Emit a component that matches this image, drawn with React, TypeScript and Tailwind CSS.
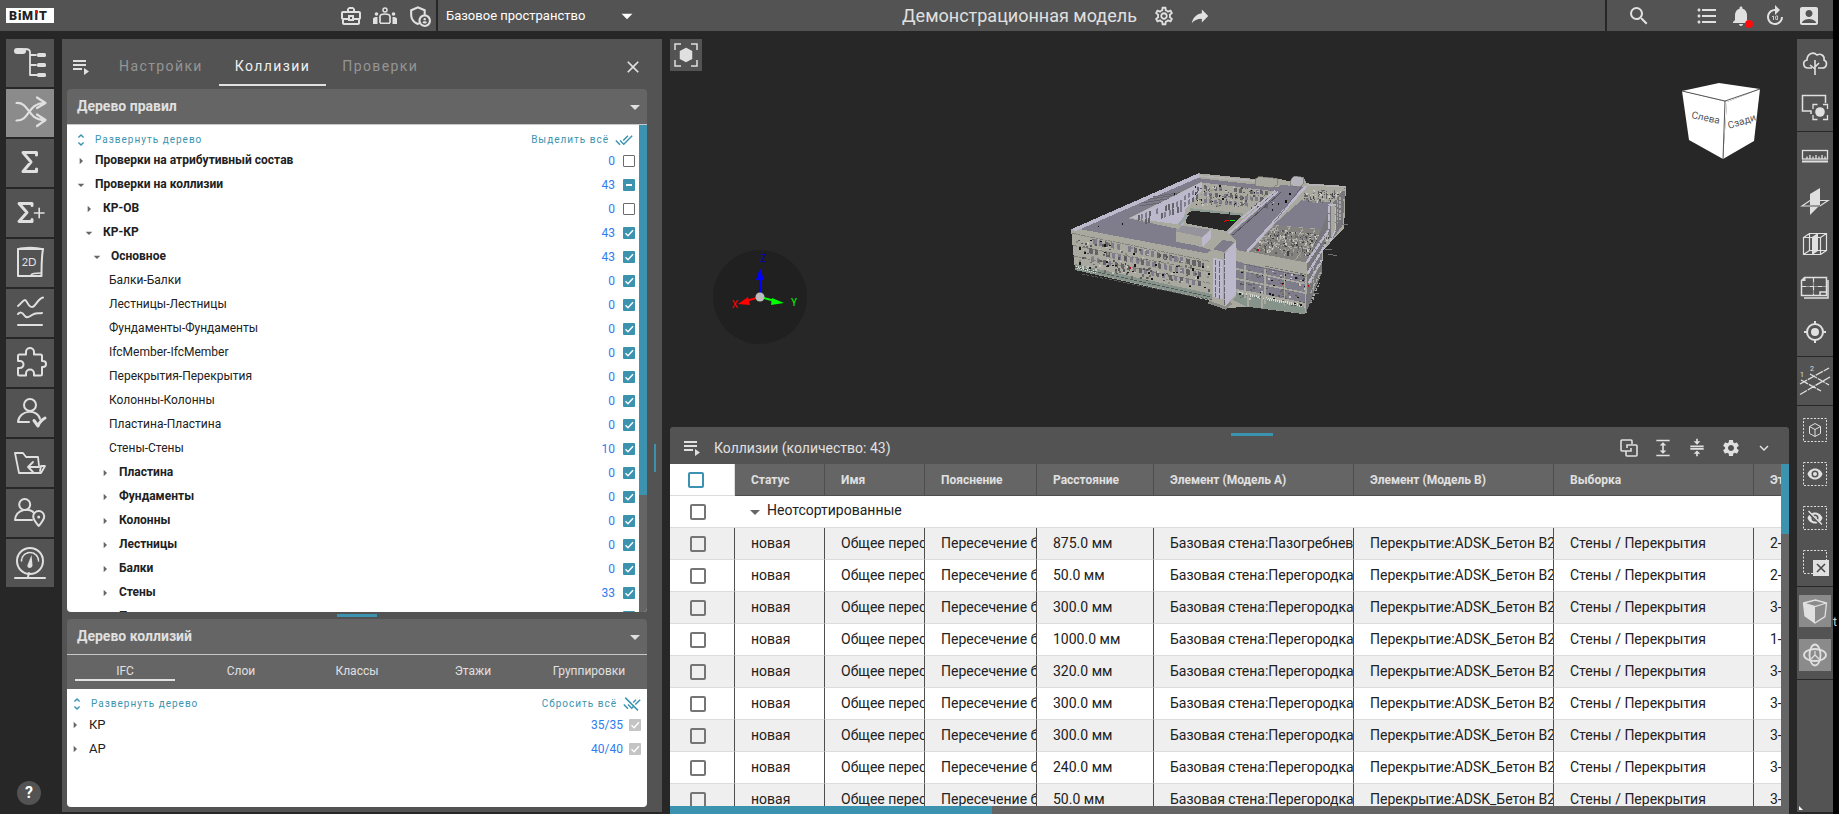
import { useState } from 'react';
import type { ReactNode } from 'react';
import clsx from 'clsx';
import {
  MdAccountBox,
  MdArrowDropDown,
  MdArrowRight,
  MdClose,
  MdCompress,
  MdDoneAll,
  MdExpand,
  MdExpandMore,
  MdFormatListBulleted,
  MdForward10,
  MdNotifications,
  MdOutlineAdminPanelSettings,
  MdOutlineBusinessCenter,
  MdOutlineSettings,
  MdRemoveDone,
  MdSearch,
  MdSettings,
  MdUnfoldMore,
} from 'react-icons/md';

type CheckState = 'on' | 'off' | 'mixed';

interface TreeNode {
  name: string;
  level: number;
  kind: 'open' | 'closed' | 'leaf';
  count: number;
  state: CheckState;
}

const RULES: TreeNode[] = [
  { name: 'Проверки на атрибутивный состав', level: 0, kind: 'closed', count: 0, state: 'off' },
  { name: 'Проверки на коллизии', level: 0, kind: 'open', count: 43, state: 'mixed' },
  { name: 'КР-ОВ', level: 1, kind: 'closed', count: 0, state: 'off' },
  { name: 'КР-КР', level: 1, kind: 'open', count: 43, state: 'on' },
  { name: 'Основное', level: 2, kind: 'open', count: 43, state: 'on' },
  { name: 'Балки-Балки', level: 3, kind: 'leaf', count: 0, state: 'on' },
  { name: 'Лестницы-Лестницы', level: 3, kind: 'leaf', count: 0, state: 'on' },
  { name: 'Фундаменты-Фундаменты', level: 3, kind: 'leaf', count: 0, state: 'on' },
  { name: 'IfcMember-IfcMember', level: 3, kind: 'leaf', count: 0, state: 'on' },
  { name: 'Перекрытия-Перекрытия', level: 3, kind: 'leaf', count: 0, state: 'on' },
  { name: 'Колонны-Колонны', level: 3, kind: 'leaf', count: 0, state: 'on' },
  { name: 'Пластина-Пластина', level: 3, kind: 'leaf', count: 0, state: 'on' },
  { name: 'Стены-Стены', level: 3, kind: 'leaf', count: 10, state: 'on' },
  { name: 'Пластина', level: 3, kind: 'closed', count: 0, state: 'on' },
  { name: 'Фундаменты', level: 3, kind: 'closed', count: 0, state: 'on' },
  { name: 'Колонны', level: 3, kind: 'closed', count: 0, state: 'on' },
  { name: 'Лестницы', level: 3, kind: 'closed', count: 0, state: 'on' },
  { name: 'Балки', level: 3, kind: 'closed', count: 0, state: 'on' },
  { name: 'Стены', level: 3, kind: 'closed', count: 33, state: 'on' },
  { name: 'Перекрытия', level: 3, kind: 'closed', count: 0, state: 'on' },
];

const LEVEL_PADDING = ['pl-2', 'pl-4', 'pl-6', 'pl-8'];

const ROWS = [
  { distance: '875.0 мм', a: 'Базовая стена:Пазогребневая', floor: '2-й этаж' },
  { distance: '50.0 мм', a: 'Базовая стена:Перегородка', floor: '2-й этаж' },
  { distance: '300.0 мм', a: 'Базовая стена:Перегородка', floor: '3-й этаж' },
  { distance: '1000.0 мм', a: 'Базовая стена:Перегородка', floor: '1-й этаж' },
  { distance: '320.0 мм', a: 'Базовая стена:Перегородка', floor: '3-й этаж' },
  { distance: '300.0 мм', a: 'Базовая стена:Перегородка', floor: '3-й этаж' },
  { distance: '300.0 мм', a: 'Базовая стена:Перегородка', floor: '3-й этаж' },
  { distance: '240.0 мм', a: 'Базовая стена:Перегородка', floor: '3-й этаж' },
  { distance: '50.0 мм', a: 'Базовая стена:Перегородка', floor: '3-й этаж' },
];

const COLUMNS = ['Статус', 'Имя', 'Пояснение', 'Расстояние', 'Элемент (Модель A)', 'Элемент (Модель B)', 'Выборка', 'Этаж'];

function Checkbox({ label, state = 'off', muted = false }: { label: string; state?: CheckState; muted?: boolean }) {
  const [value, setValue] = useState<CheckState>(state);
  return (
    <span className="relative flex size-3 shrink-0">
      <input
        type="checkbox"
        aria-label={label}
        checked={value === 'on'}
        onChange={(e) => setValue(e.target.checked ? 'on' : 'off')}
        className={clsx(
          'size-3 appearance-none rounded-[1px]',
          value === 'off' && 'border border-[#6b6b6b] bg-white',
          value !== 'off' && (muted ? 'bg-[#c4c4c4]' : 'bg-[#3c93b0]'),
        )}
      />
      {value !== 'off' && (
        <svg viewBox="0 0 12 12" className="pointer-events-none absolute inset-0 size-3" fill="none" stroke="#fff" strokeWidth="1.4">
          {value === 'on' ? <path d="M2.5 6.2 5 8.7 10 3.3" /> : <path d="M3 6h6" strokeWidth="1.8" />}
        </svg>
      )}
    </span>
  );
}

function RowCheckbox({ label, accent = false }: { label: string; accent?: boolean }) {
  return (
    <input
      type="checkbox"
      aria-label={label}
      className={clsx(
        'block size-4 appearance-none rounded-xs border-2 bg-transparent checked:bg-[#3c93b0]',
        accent ? 'border-[#3c93b0]' : 'border-[#757575]',
      )}
    />
  );
}

function MenuIcon() {
  return (
    <svg viewBox="0 0 16 16" className="size-4" fill="currentColor">
      <path d="M0 1h13v2H0zM0 5h13v2H0zM0 9h9v2H0zM11 9l5 3.500-5 3.500z" />
    </svg>
  );
}

/* ---------- left rail icons ---------- */

const railIcons: { label: string; icon: ReactNode }[] = [
  {
    label: 'Дерево модели',
    icon: (
      <>
        <rect x="8" y="9" width="12" height="6" rx="3" fill="currentColor" stroke="none" />
        <path d="M19 10c4 0 5 1 5 3v23h7M24 16h6M24 26h6" strokeWidth="1.8" />
        <rect x="31" y="14" width="9" height="4" rx="1.5" fill="currentColor" stroke="none" />
        <rect x="31" y="24" width="9" height="4" rx="1.5" fill="currentColor" stroke="none" />
        <rect x="31" y="34" width="9" height="4" rx="1.5" fill="currentColor" stroke="none" />
      </>
    ),
  },
  {
    label: 'Коллизии',
    icon: <path d="M10.500 14C24 13 21 31.500 39 31M10.500 31.500C24 32 21 14 39 14M31 8.500l8.500 5.500-8.500 5M31 25.500l8.500 5.500-8.500 6" strokeWidth="2.2" />,
  },
  { label: 'Сумма', icon: <path d="M30.500 16v-2.500H17L25 23 17 32.500h13.500V30" strokeWidth="3" /> },
  {
    label: 'Добавить сумму',
    icon: (
      <>
        <path d="M26 16.500V14.500H13L21 23.500 13 32.500H26V30.500" strokeWidth="3" />
        <path d="M28.500 24h9.500M33.200 19.300v9.500" strokeWidth="1.6" />
      </>
    ),
  },
  {
    label: '2D',
    icon: (
      <>
        <path d="M12 10h25c-1.500 8-1.500 18-1.500 27H12z" strokeWidth="2" />
        <path d="M12 10c6-2 18-2 25 0M25 36c1-2 5-2 10-2" strokeWidth="1.5" />
        <text x="23" y="27" textAnchor="middle" fontSize="11" fill="currentColor" stroke="none" fontFamily="Lato, sans-serif">2D</text>
      </>
    ),
  },
  { label: 'Графики', icon: <path d="M12 17c4-3 5-6 7-6s3 7 7 7 5-8 11-9.500M12 25c2-2 4-2 6 1s4 3 8 0 6-1 10-2M12 36h24" strokeWidth="2" /> },
  {
    label: 'Плагины',
    icon: <path d="M12 17a1.500 1.500 0 0 1 1.500-1.500H20v-2.500a4 4 0 0 1 8 0v2.500h6.500A1.500 1.500 0 0 1 36 17v5h1a3 3 0 0 1 0 6h-1v7a1.500 1.500 0 0 1-1.500 1.500H28v-2a4 4 0 0 0-8 0v2h-6.500A1.500 1.500 0 0 1 12 35v-6h2a3.500 3.500 0 0 0 0-7h-2z" strokeWidth="2" />,
  },
  {
    label: 'Проверка',
    icon: (
      <>
        <circle cx="24" cy="16" r="6" strokeWidth="2" />
        <path d="M23 33H12c1-13 20-13 22-3" strokeWidth="2" />
        <path d="M28 31.500l4 5.500c1.500-4 3.500-6 7-8" strokeWidth="3" />
      </>
    ),
  },
  {
    label: 'Файлы',
    icon: <path d="M9 14h8l3 4h12l1 9M9 14l4 20h22l4-7h-4l-1 5M33 28H22M27 23l-5 5 5 5" strokeWidth="1.8" />,
  },
  {
    label: 'Пользователи на карте',
    icon: (
      <>
        <circle cx="18.700" cy="15.500" r="5.500" strokeWidth="2" />
        <path d="M26 31H9c1-12 16-12 19-7" strokeWidth="2" />
        <path d="M32.700 37c-4-5-5.500-6.500-5.500-9.500a5.500 5.500 0 0 1 11 0c0 3-1.500 4.500-5.500 9.500z" strokeWidth="2" />
        <circle cx="32.700" cy="28" r="1.500" fill="currentColor" stroke="none" />
      </>
    ),
  },
  {
    label: 'Показатели',
    icon: (
      <>
        <circle cx="24" cy="22" r="13" strokeWidth="2" />
        <path d="M9 39h30M22 38l1-4" strokeWidth="2" />
        <path d="M15.500 22a8.500 8.500 0 0 1 17 0" strokeWidth="1.600" strokeDasharray="2 1.300" />
        <path d="M25.500 16l1 10c0 4-6 4-5 0z" fill="currentColor" stroke="none" />
      </>
    ),
  },
];

/* ---------- right toolbar icons ---------- */

const dashedBox = <rect x="4.500" y="4.500" width="23" height="23" strokeDasharray="2 1.500" />;
const eye = (
  <path
    d="M16 10.500c-3.600 0-6.300 2.300-7.500 5.500 1.200 3.200 3.900 5.500 7.500 5.500s6.300-2.300 7.500-5.500c-1.200-3.200-3.900-5.500-7.500-5.500zm0 9a3.500 3.500 0 1 1 0-7 3.500 3.500 0 0 1 0 7zm0-1.500a2 2 0 1 0 0-4 2 2 0 0 0 0 4z"
    fill="currentColor"
    stroke="none"
  />
);

interface Tool {
  label: string;
  active?: boolean;
  icon: ReactNode;
}

const toolGroups: Tool[][] = [
  [
    {
      label: 'Природа',
      icon: <path d="M13 21H9c-5 0-6-7-1-8 0-6 6-9 10-5 4-2 8 1 7 5 4 2 3 8-2 8h-4M16 28V13M16 20l4-4M16 22l-5-4" strokeWidth="1.600" />,
    },
    {
      label: 'Область',
      icon: (
        <>
          <path d="M12 23v-3H3.500V4.500h23V12" strokeWidth="1.500" />
          <path d="M14 18v-4.500h4.500M24 13.500h4.500V18M28.500 24v4.500H24M18.500 28.500H14V24" strokeWidth="1.300" />
          <circle cx="21" cy="21" r="4.800" fill="currentColor" stroke="none" />
        </>
      ),
    },
  ],
  [
    {
      label: 'Линейка',
      icon: (
        <>
          <rect x="3.500" y="10.500" width="25" height="8.500" strokeWidth="1.300" />
          <path d="M8 19v-2.500M11 19v-4M14 19v-2.500M17 19v-4M20 19v-2.500M23 19v-4M26 19v-2.500" strokeWidth="1.300" />
          <path d="M3 21.500h26" strokeWidth="2" />
        </>
      ),
    },
    {
      label: 'Плоскость сечения',
      icon: (
        <>
          <path d="M3 22l8-5.500h18L21 22z" strokeWidth="1.200" />
          <path d="M11 10l10-6v17l-10 10z" fill="currentColor" stroke="none" />
          <path d="M11 22h10" stroke="#535353" />
        </>
      ),
    },
    {
      label: 'Сечение кубом',
      icon: (
        <>
          <path d="M4.500 9.500h17v17h-17zM10.500 5.500h17v17h-17zM4.500 9.500l6-4M21.500 9.500l6-4M4.500 26.500l6-4M21.500 26.500l6-4" strokeWidth="1.200" />
          <path d="M13 9l6-4v18l-6 4z" fill="currentColor" stroke="none" />
        </>
      ),
    },
    {
      label: 'План',
      icon: (
        <>
          <path d="M5.500 5.500h22v18h-25v-15z" strokeWidth="1.500" />
          <path d="M14.500 5.500v18M2.500 14.500h25" strokeWidth="1.200" strokeDasharray="5 1 1 1" />
          <path d="M29 8v18H5M21 23v-3h6" strokeWidth="1.500" />
          <path d="M2.500 9l4-4v4z" fill="currentColor" stroke="none" />
        </>
      ),
    },
    {
      label: 'Центрировать',
      icon: (
        <>
          <circle cx="16" cy="16" r="8" strokeWidth="2" />
          <circle cx="16" cy="16" r="4" fill="currentColor" stroke="none" />
          <path d="M16 5v3M16 24v3M5 16h3M24 16h3" strokeWidth="2" />
        </>
      ),
    },
  ],
  [
    {
      label: 'Оси',
      icon: (
        <>
          <path d="M1 29.500L31 12M1 19l29-16M2 15l20 11M11 9l19 11" strokeWidth="1.300" strokeDasharray="8 1" />
          <text x="1" y="12" fontSize="7" fill="currentColor" stroke="none" fontFamily="Roboto, sans-serif">1</text>
          <text x="11" y="6" fontSize="7" fill="currentColor" stroke="none" fontFamily="Roboto, sans-serif">2</text>
        </>
      ),
    },
  ],
  [
    {
      label: 'Выделенное',
      icon: (
        <>
          {dashedBox}
          <path d="M16 9.500l5.500 3v7l-5.500 3-5.500-3v-7zM10.500 12.500l5.500 3 5.500-3M16 15.500v7" />
        </>
      ),
    },
    { label: 'Показать', icon: <>{dashedBox}{eye}</> },
    {
      label: 'Скрыть',
      icon: (
        <>
          {dashedBox}
          {eye}
          <path d="M8.500 9.500l14 13.500" stroke="#535353" strokeWidth="2.500" />
          <path d="M9.500 9l13.500 13.500" strokeWidth="1.500" />
        </>
      ),
    },
    {
      label: 'Сбросить выделение',
      icon: (
        <>
          {dashedBox}
          <path d="M14 14h16v16H14z" fill="currentColor" stroke="none" />
          <path d="M18 18l8 8M26 18l-8 8" stroke="#444" strokeWidth="1.500" />
        </>
      ),
    },
  ],
  [
    {
      label: 'Куб навигации',
      active: true,
      icon: (
        <>
          <path d="M4.500 8l12-3 11 3-1.500 13.500L16 28 6 21zM4.500 8L16 11.500 27.500 8" strokeWidth="1.300" />
          <path d="M4.500 8L16 11.500V28L6 21z" fill="currentColor" stroke="none" />
        </>
      ),
    },
    {
      label: 'Орбита',
      active: true,
      icon: (
        <>
          <ellipse cx="16" cy="16" rx="11" ry="6" strokeWidth="1.800" />
          <ellipse cx="16" cy="16" rx="5.500" ry="10.500" strokeWidth="1.800" />
          <path d="M16 12v4l-4 4M16 16l4 4" strokeWidth="1.200" />
        </>
      ),
    },
  ],
];

/* ---------- building model ---------- */

// small seeded generator so the model keeps its speckle between renders
function createRandom(seed: number) {
  let s = seed;
  return () => {
    s = (s * 16807) % 2147483647;
    return s / 2147483647;
  };
}

const rnd = createRandom(4391);

function windowsOnFacade(x0: number, y0: number, x1: number, y1: number, cols: number, rows: number, step: number, w: number, h: number) {
  const list: { d: string; fill: string }[] = [];
  const slope = (y1 - y0) / (x1 - x0);
  for (let r = 0; r < rows; r++) {
    for (let c = 0; c < cols; c++) {
      if (rnd() < 0.08) continue;
      const x = Math.round(x0 + ((x1 - x0) * c) / cols + rnd() * 3);
      const y = Math.round(y0 + slope * (x - x0) + r * step);
      list.push({
        d: `M${x} ${y}l${w} ${Math.round(w * slope)}v${h}l${-w} ${-Math.round(w * slope)}z`,
        fill: rnd() < 0.4 ? '#636368' : '#7f7d8b',
      });
    }
  }
  return list;
}

const WINDOWS = [
  ...windowsOnFacade(140, 262, 490, 336, 20, 1, 0, 10, 17),
  ...windowsOnFacade(146, 294, 490, 368, 20, 1, 0, 10, 16),
  ...windowsOnFacade(152, 320, 490, 396, 19, 1, 0, 9, 15),
  ...windowsOnFacade(490, 106, 690, 124, 13, 3, 20, 9, 12),
  ...windowsOnFacade(290, 197, 430, 148, 12, 2, 18, 6, 17),
  ...windowsOnFacade(430, 140, 480, 108, 4, 2, 20, 6, 14),
];

const FACADE_COLORS = ['#57575c', '#57575c', '#8a8a80', '#c4c3bd', '#6d6d68', '#161616'];
const WING_COLORS = ['#57575c', '#a9a99f', '#c9c9c0', '#6d6d70', '#93928c', '#3f3f42'];

const SPECKS = Array.from({ length: 900 }, (_, i) => {
  const zone = i % 6;
  const u = rnd();
  const v = rnd();
  let x = 105 + u * 400;
  let y = 255 + u * 80 + v * 92;
  let palette = FACADE_COLORS;
  if (zone === 1 || zone === 4) {
    x = 640 + u * 180 + (1 - v) * 50;
    y = 232 + v * 65 + u * 25;
    palette = WING_COLORS;
  }
  if (zone === 2) {
    x = 790 + u * 115;
    y = 120 + v * 32;
    palette = WING_COLORS;
  }
  if (zone === 3) {
    x = 590 + u * 205;
    y = 345 + v * 95 + u * 30;
  }
  if (zone === 5) {
    x = 460 + u * 240;
    y = 103 + v * 60 + u * 15;
  }
  return { x: Math.round(x), y: Math.round(y), fill: palette[Math.floor(rnd() * palette.length)] };
});

function Building() {
  return (
    <svg viewBox="0 0 1020 570" className="absolute top-[119px] left-[370px] w-[340px]" shapeRendering="crispEdges" role="img" aria-label="Модель здания">
      {/* walls */}
      <path d="M93 238L475 70 655 88 710 85 755 95 790 80 800 100 918 108 912 235 850 300 845 370 795 493 620 470 555 475 510 452 105 360z" fill="#a9a99f" />
      <path d="M105 342L515 432V450L105 360z" fill="#86938a" />
      <path d="M580 425l215 45v22l-175-22-40-20z" fill="#86938a" />
      <path d="M600 430l190 38M107 350l60 16" stroke="#d5ddd5" strokeWidth="8" strokeDasharray="3 3" />
      <path d="M105 352L515 442M125 372L515 450" stroke="#55595a" strokeWidth="3" strokeDasharray="9 5" />
      {/* roofs */}
      <path d="M108 235L470 84 720 112 712 125 482 97 265 205 410 236V270L515 300 500 310z" fill="#7f7d8b" />
      <path d="M712 128L720 104 795 112 618 306 590 300 588 270 570 253z" fill="#7f7d8b" />
      <path d="M785 150L872 157 855 238 700 225z" fill="#7f7d8b" />
      <path d="M93 238L475 70 478 82 108 243z" fill="#bdb9cc" />
      <path d="M478 78L655 94M800 104l116 6" stroke="#b5b3b6" strokeWidth="5" />
      <path d="M300 168l90-14M310 158l90-14M325 148l90-14M340 140l80-12" stroke="#66656e" strokeWidth="3" />
      {/* courtyard */}
      <path d="M270 204L485 97V122L435 180 430 225z" fill="#bdb9cc" />
      <path d="M458 180L605 196 560 243 500 232 437 220 442 192z" fill="#272727" />
      <path d="M450 178L610 194" stroke="#8f9c93" strokeWidth="7" />
      <path d="M418 224l25-30" stroke="#9aa6a6" strokeWidth="9" />
      {/* floors of the front facade */}
      <path d="M97 250L510 334M98 286L512 366M100 318L512 400" stroke="#6d6d68" strokeWidth="2" strokeDasharray="14 4 6 3" />
      {/* right wing */}
      <path d="M702 226L862 240 800 338 628 305z" fill="#83827f" />
      <path d="M690 240l160 18M672 258l165 20M655 275l160 24M710 228l-65 78M750 232l-65 78M790 236l-60 84M825 240l-58 90" stroke="#aeada5" strokeWidth="3" strokeDasharray="12 3" />
      <path d="M612 340L800 378V460L612 420z" fill="#7f7d8b" />
      <path d="M582 332l30 7v85l-30-8z" fill="#7f7d8b" />
      {WINDOWS.map((w, i) => (
        <path key={i} d={w.d} fill={w.fill} />
      ))}
      {SPECKS.map((s, i) => (
        <rect key={i} x={s.x} y={s.y} width={i % 3 ? 4 : 6} height={i % 4 ? 4 : 7} fill={s.fill} />
      ))}
      <path d="M588 305L800 345V375L588 330z" fill="#a9a99f" />
      <path d="M582 355L800 402M582 385L800 430M582 418L800 462M615 330v115M675 345v118M733 357v110M798 345v145" stroke="#a9a99f" strokeWidth="5" />
      <path d="M612 343l188 38M676 348l122 26" stroke="#5c5c60" strokeWidth="2" strokeDasharray="10 5" />
      <path d="M802 340L872 168 916 112 908 225 872 275 862 242 846 300 845 368 798 490z" fill="#77767b" />
      <path d="M800 338L866 240V165L885 166V240L870 275M802 372L856 285M806 400L846 330" stroke="#bdb9cc" strokeWidth="7" strokeDasharray="22 2" fill="none" />
      <path d="M872 168l14-2v70l-14 30z" fill="#a9a99f" />
      <path d="M812 400l28-60M812 430l30-65M812 460l26-60M892 150v70M900 140v70M820 350v100" stroke="#a9a99f" strokeWidth="4" strokeDasharray="9 4" />
      <path d="M790 128l126-8M788 142l124 8" stroke="#a9a99f" strokeWidth="4" strokeDasharray="7 5" />
      <path d="M625 430v40M665 425v48" stroke="#a9a99f" strokeWidth="6" />
      <path d="M855 298l20 2M865 313l25 4M905 224l18 1M820 430h18M805 455h12" stroke="#6f7173" strokeWidth="3" />
      <path d="M715 124L565 250M706 122L605 204" stroke="#bdb9cc" strokeWidth="5" />
      <path d="M722 128L578 255" stroke="#55545d" strokeWidth="3" />
      <path d="M798 108L622 305" stroke="#bdb9cc" strokeWidth="8" />
      <path d="M786 108L703 217" stroke="#5b5a63" strokeWidth="2" />
      {/* rooftop boxes */}
      <path d="M407 242L425 228 512 240 488 262 487 290 407 275z" fill="#a9a99f" />
      <path d="M407 244l80 17 24-22-86-12z" fill="#95949c" />
      <path d="M487 262l26-22v26l-26 24z" fill="#bdb9cc" />
      <path d="M645 88l12-8 54 5v20l-14 9-52-6z" fill="#a9a99f" stroke="#77766f" strokeWidth="2" />
      <path d="M752 90l10-12 28 4v20l-10 9-28-4z" fill="#b6b4bd" stroke="#77766f" strokeWidth="2" />
      {/* stair tower */}
      <path d="M512 300L545 266 588 274V440L555 475 515 450z" fill="#a9a99f" />
      <path d="M553 312L588 274V432L555 470z" fill="#bdb9cc" />
      <path d="M520 298l28-28 36 6-32 30z" fill="#7f7d8b" />
      <path d="M518 322l30 8v118l-30-8z" fill="#bdb9cc" />
      <path d="M526 330v112M538 334v112M552 310v160" stroke="#66656e" strokeWidth="3" strokeDasharray="16 4" />
      <path d="M506 456l50 18 18-16" stroke="#8a8a86" strokeWidth="9" fill="none" />
      <path d="M256 340v6M270 352v6M806 404v6M654 298v5M727 402v4" stroke="#b01010" strokeWidth="4" />
      <path d="M175 228v4M248 220v5M715 160v5M738 150v8M750 130v6M404 128v6M540 105v5" stroke="#111" strokeWidth="4" />
      {/* origin marker */}
      <path d="M568 187v22" stroke="#1414ff" strokeWidth="3" />
      <path d="M552 214l14-4" stroke="#f00" strokeWidth="3" />
      <path d="M570 210l15 3" stroke="#0f0" strokeWidth="3" />
    </svg>
  );
}

function AxisGizmo() {
  return (
    <svg viewBox="0 0 94 94" className="absolute top-[219px] left-[43px] w-[94px]" role="img" aria-label="Оси координат">
      <circle cx="47" cy="47" r="47" fill="#202020" />
      <path d="M47 47V28" stroke="#0000ff" strokeWidth="2" />
      <path d="M43 30l4-12 4 12z" fill="#0000ff" />
      <path d="M47 47l-14 4" stroke="#ff0000" strokeWidth="2" />
      <path d="M25 54l10-7 2 8z" fill="#ff0000" />
      <path d="M47 47l15 4" stroke="#00ff00" strokeWidth="2" />
      <path d="M71 53l-12-5-1 7z" fill="#00ff00" />
      <circle cx="47" cy="47" r="4.500" fill="#bdbdbd" />
      <g fontSize="10" fontFamily="Roboto, sans-serif" textAnchor="middle">
        <text x="50" y="12" fill="#0000b0">Z</text>
        <text x="22" y="58" fill="#ff0000">X</text>
        <text x="81" y="56" fill="#00ff00">Y</text>
      </g>
    </svg>
  );
}

function ViewCube() {
  return (
    <svg viewBox="0 0 80 78" className="absolute top-[51px] right-[28px] w-20" role="img" aria-label="Куб навигации">
      <path d="M1 9L38 1 79 7 46 20z" fill="#fff" />
      <path d="M1 9L46 20 42 77 8 58z" fill="#fff" />
      <path d="M46 20L79 7 73 59 42 77z" fill="#fff" />
      <path d="M1 9L44 19 79 7M44 19L42 77" fill="none" stroke="#555" strokeWidth="1" />
      <g fontSize="10" fill="#555" fontFamily="Roboto, sans-serif">
        <text x="10" y="36" transform="rotate(12 10 36)">Слева</text>
        <text x="48" y="47" transform="rotate(-18 48 47)">Сзади</text>
      </g>
    </svg>
  );
}

/* ---------- page parts ---------- */

function Header() {
  return (
    <header className="flex h-[31px] shrink-0 bg-[#535353] text-[#e0e0e0]">
      <div className="flex w-[436px] items-center justify-between pr-1 pl-[6px]">
        <a href="#" aria-label="BiMiT" className="flex h-[15px] w-12 items-center justify-center bg-white">
          <svg viewBox="0 0 48 15" className="w-12">
            <g fontFamily="Roboto, sans-serif" fontWeight="900" fontSize="12.500" fill="#222">
              <text x="3" y="12">B</text>
              <text x="12" y="12">i</text>
              <text x="16" y="12">M</text>
              <text x="28.500" y="12">i</text>
              <text x="33" y="12">T</text>
            </g>
            <path d="M29 2.500h3v3h-3z" fill="#e11" />
          </svg>
        </a>
        <div className="flex items-center gap-[9px]">
          <button type="button" aria-label="Проекты"><MdOutlineBusinessCenter size={24} /></button>
          <button type="button" aria-label="Команды">
            <svg viewBox="0 0 26 24" className="h-6 w-[26px]" fill="currentColor">
              <circle cx="13" cy="6" r="2" fill="none" stroke="currentColor" strokeWidth="1.500" />
              <path d="M8 19v-6.500c0-2 2-2.500 5-2.500s5 .5 5 2.500V19" fill="none" stroke="currentColor" strokeWidth="1.700" />
              <circle cx="4.500" cy="10" r="1.800" />
              <circle cx="21.500" cy="10" r="1.800" />
              <path d="M1 20v-5c0-1.500 1.500-2 4.500-2v7zM25 20v-5c0-1.500-1.500-2-4.500-2v7zM8 18.500h10V20H8z" />
            </svg>
          </button>
          <button type="button" aria-label="Администрирование"><MdOutlineAdminPanelSettings size={25} /></button>
        </div>
      </div>
      <label className="relative flex w-[216px] items-center border-l-2 border-[#272727]">
        <span className="sr-only">Пространство</span>
        <select className="w-full appearance-none bg-transparent pl-2 text-[13px] leading-[18px] text-white outline-none">
          <option>Базовое пространство</option>
        </select>
        <MdArrowDropDown size={26} className="pointer-events-none absolute right-3 text-white" />
      </label>
      <div className="flex flex-1 items-center justify-center gap-2 pr-[144px]">
        <h1 className="mr-2 text-[18px] leading-6">Демонстрационная модель</h1>
        <button type="button" aria-label="Настройки модели"><MdOutlineSettings size={22} /></button>
        <button type="button" aria-label="Поделиться" className="pl-[6px]">
          <svg viewBox="0 0 24 24" className="size-[22px]" fill="currentColor">
            <path d="M14 9V5l7 7-7 7v-4.100c-5 0-8.500 1.600-11 5.100 1-5 4-10 11-11z" />
          </svg>
        </button>
      </div>
      <div className="flex w-[228px] items-center justify-between border-l-2 border-[#272727] pr-3 pl-5">
        <button type="button" aria-label="Поиск"><MdSearch size={24} /></button>
        <div className="flex items-center gap-[10px]">
          <button type="button" aria-label="Список"><MdFormatListBulleted size={24} /></button>
          <button type="button" aria-label="Уведомления" className="relative">
            <MdNotifications size={24} />
            <span className="absolute right-0 bottom-0 size-2 rounded-full bg-[#ff0d0d]" />
          </button>
          <button type="button" aria-label="Обновить"><MdForward10 size={24} /></button>
          <button type="button" aria-label="Профиль"><MdAccountBox size={24} /></button>
        </div>
      </div>
    </header>
  );
}

function SectionTitle({ children }: { children: string }) {
  return (
    <button
      type="button"
      className="flex h-9 w-full shrink-0 items-center justify-between rounded-t border-b border-[#c8c8c8] bg-[#656565] pl-[10px] text-[14px] font-bold text-[#e0e0e0]"
    >
      {children}
      <MdArrowDropDown size={24} />
    </button>
  );
}

function Toggle({ open }: { open: boolean }) {
  return (
    <button type="button" aria-label={open ? 'Свернуть' : 'Развернуть'} className="flex size-3 items-center justify-center text-[#666]">
      {open ? <MdArrowDropDown size={16} className="shrink-0" /> : <MdArrowRight size={16} className="shrink-0" />}
    </button>
  );
}

function TreeActions({ right, icon }: { right: string; icon: ReactNode }) {
  return (
    <div className="flex shrink-0 items-center justify-between text-[10px] leading-6 tracking-widest text-[#3c93b0]">
      <button type="button" className="flex items-center gap-[6px]">
        <MdUnfoldMore size={16} />
        Развернуть дерево
      </button>
      <button type="button" className="flex items-center gap-[6px]">
        {right}
        {icon}
      </button>
    </div>
  );
}

function RulesTree() {
  return (
    <div className="flex min-h-0 flex-1 overflow-hidden rounded-b bg-white">
      <div className="min-w-0 flex-1 overflow-hidden">
        <div className="h-6 pt-[3px] pr-[6px] pl-[6px]">
          <TreeActions right="Выделить всё" icon={<MdDoneAll size={18} />} />
        </div>
        <ul>
          {RULES.map((node, i) => (
            <li key={i} className={clsx('flex h-6 items-center gap-2 pr-1', LEVEL_PADDING[node.level])}>
              {node.kind !== 'leaf' && <Toggle open={node.kind === 'open'} />}
              <span
                className={clsx(
                  'flex-1 pb-[2px] text-[12px] leading-4 text-[#212121]',
                  node.kind === 'leaf' ? 'pl-[10px]' : 'font-bold',
                )}
              >
                {node.name}
              </span>
              <span className="text-[12px] leading-4 text-[#2f7bf0]">{node.count}</span>
              <Checkbox label={node.name} state={node.state} />
            </li>
          ))}
        </ul>
      </div>
      <div className="w-2 bg-[#656565]">
        <div className="h-[76%] bg-[#3c93b0]" />
      </div>
    </div>
  );
}

function CollisionTree() {
  const [tab, setTab] = useState('IFC');
  return (
    <section className="flex h-[188px] shrink-0 flex-col">
      <SectionTitle>Дерево коллизий</SectionTitle>
      <div className="grid h-[34px] shrink-0 grid-cols-5 bg-[#656565]">
        {['IFC', 'Слои', 'Классы', 'Этажи', 'Группировки'].map((name) => (
          <button
            key={name}
            type="button"
            onClick={() => setTab(name)}
            className={clsx(
              'mx-2 mb-2 border-b-2 pt-2 text-[12px] leading-4 text-[#e0e0e0]',
              tab === name ? 'border-[#e0e0e0]' : 'border-transparent',
            )}
          >
            {name}
          </button>
        ))}
      </div>
      <div className="flex-1 rounded-b bg-white">
        <div className="h-6 pt-[3px] pr-[6px] pl-[2px]">
          <TreeActions right="Сбросить всё" icon={<MdRemoveDone size={18} />} />
        </div>
        <ul>
          {[['КР', '35/35'], ['АР', '40/40']].map(([name, count]) => (
            <li key={name} className="flex h-6 items-center gap-[6px] pr-[6px] pl-[2px]">
              <Toggle open={false} />
              <span className="flex-1 pl-[2px] text-[13px] leading-4 text-[#212121]">{name}</span>
              <span className="text-[12px] leading-4 text-[#2f7bf0]">{count}</span>
              <Checkbox label={name} state="on" muted />
            </li>
          ))}
        </ul>
      </div>
    </section>
  );
}

function LeftPanel() {
  const [tab, setTab] = useState('Коллизии');
  return (
    <aside className="flex w-[600px] shrink-0 bg-[#535353] pb-[5px] pl-[5px]">
      <div className="flex min-w-0 flex-1 flex-col">
        <div className="flex h-[50px] shrink-0 items-center text-[#e0e0e0]">
          <button type="button" aria-label="Меню" className="mr-[14px] ml-[6px] pt-[6px]"><MenuIcon /></button>
          {['Настройки', 'Коллизии', 'Проверки'].map((name) => (
            <button
              key={name}
              type="button"
              onClick={() => setTab(name)}
              className={clsx(
                'mt-[7px] h-9 border-b-2 px-4 text-[14px] tracking-widest',
                tab === name ? 'border-[#e0e0e0] text-[#f0f0f0]' : 'border-transparent text-[#959595]',
              )}
            >
              {name}
            </button>
          ))}
          <button type="button" aria-label="Закрыть" className="mr-1 ml-auto pt-[6px]"><MdClose size={20} /></button>
        </div>
        <section className="flex min-h-0 flex-1 flex-col">
          <SectionTitle>Дерево правил</SectionTitle>
          <RulesTree />
        </section>
        <div className="flex h-[7px] shrink-0 items-start justify-center pt-[2px]">
          <div className="h-[3px] w-10 bg-[#3c93b0]" />
        </div>
        <CollisionTree />
      </div>
      <div className="flex w-[15px] items-center justify-center pt-[70px]">
        <div className="h-7 w-[2px] bg-[#3c93b0]" />
      </div>
    </aside>
  );
}

function CollisionTable() {
  return (
    <section className="flex h-[387px] shrink-0 flex-col overflow-hidden rounded-t bg-[#656565]">
      <div className="relative flex h-[37px] shrink-0 items-center justify-between bg-[#535353] pt-[5px] pr-4 pl-[14px] text-[#e0e0e0]">
        <div className="absolute top-[6px] left-[52%] h-[3px] w-[42px] -translate-x-1/2 bg-[#3c93b0]" />
        <div className="flex items-center gap-[14px]">
          <button type="button" aria-label="Меню таблицы"><MenuIcon /></button>
          <h2 className="text-[14px] leading-5">Коллизии (количество: 43)</h2>
        </div>
        <div className="flex items-center gap-[14px]">
          <button type="button" aria-label="Копировать">
            <svg viewBox="0 0 20 20" className="size-5" fill="none" stroke="currentColor" strokeWidth="1.600">
              <path d="M12 10V13H3a1 1 0 0 1-1-1V3a1 1 0 0 1 1-1h9a1 1 0 0 1 1 1v3M8 10V7h9a1 1 0 0 1 1 1v9a1 1 0 0 1-1 1H8a1 1 0 0 1-1-1v-4" />
            </svg>
          </button>
          <button type="button" aria-label="Развернуть строки"><MdExpand size={20} /></button>
          <button type="button" aria-label="Свернуть строки"><MdCompress size={20} /></button>
          <button type="button" aria-label="Настройки таблицы"><MdSettings size={20} /></button>
          <button type="button" aria-label="Скрыть таблицу"><MdExpandMore size={18} /></button>
        </div>
      </div>
      <div className="flex min-h-0 flex-1">
        <div className="min-w-0 flex-1 overflow-hidden">
          <table className="w-[1284px] table-fixed border-separate border-spacing-0 bg-white text-left text-[14px] text-[#212121]">
            <colgroup>
              <col className="w-[65px]" />
              <col className="w-[90px]" />
              <col className="w-[100px]" />
              <col className="w-[112px]" />
              <col className="w-[117px]" />
              <col className="w-[200px]" />
              <col className="w-[200px]" />
              <col className="w-[200px]" />
              <col className="w-[200px]" />
            </colgroup>
            <thead>
              <tr className="h-8">
                <th className="border-r border-b border-[#dcdcdc] p-0 pl-[18px]">
                  <RowCheckbox label="Выбрать всё" accent />
                </th>
                {COLUMNS.map((name) => (
                  <th key={name} className="overflow-hidden border-r border-b border-[#4e4e4e] bg-[#656565] p-0 pl-4 text-[12px] font-bold whitespace-nowrap text-[#e0e0e0]">
                    {name}
                  </th>
                ))}
              </tr>
            </thead>
            <tbody>
              <tr className="h-8">
                <td className="border-b border-[#dcdcdc] p-0 pl-5"><RowCheckbox label="Неотсортированные" /></td>
                <td colSpan={8} className="border-b border-[#dcdcdc] p-0 pl-2">
                  <button type="button" className="flex h-5 items-center pb-1 leading-5">
                    <MdArrowDropDown size={24} className="mt-1 text-[#666]" />
                    Неотсортированные
                  </button>
                </td>
              </tr>
              {ROWS.map((row, i) => (
                <tr key={i} className="h-8 odd:bg-white even:bg-[#efefef]">
                  <td className="border-r border-b border-r-[#4e4e4e] border-b-[#dcdcdc] p-0 pl-5"><RowCheckbox label={`Коллизия ${i + 1}`} /></td>
                  {['новая', 'Общее пересечение', 'Пересечение балок', row.distance, row.a, 'Перекрытие:ADSK_Бетон В25', 'Стены / Перекрытия', row.floor].map((text, j) => (
                    <td key={j} className="overflow-hidden border-r border-b border-r-[#4e4e4e] border-b-[#dcdcdc] p-0 pb-[2px] pl-4 leading-5 whitespace-nowrap">
                      {text}
                    </td>
                  ))}
                </tr>
              ))}
            </tbody>
          </table>
        </div>
        <div className="w-2">
          <div className="h-[70px] bg-[#3c93b0]" />
        </div>
      </div>
      <div className="h-2 shrink-0 bg-[#656565]">
        <div className="h-2 w-[322px] bg-[#3c93b0]" />
      </div>
    </section>
  );
}

function RightToolbar() {
  return (
    <nav aria-label="Инструменты" className="mt-2 mb-[2px] flex w-9 shrink-0 flex-col gap-px">
      {toolGroups.map((group, i) => (
        <div key={i} className="flex flex-col bg-[#535353] py-[2px]">
          {group.map((tool) => (
            <div key={tool.label} className="flex h-11 items-center justify-center">
              <button
                type="button"
                aria-label={tool.label}
                className={clsx('size-8 text-[#e0e0e0]', tool.active && 'bg-[#8b8b8b]')}
              >
                <svg viewBox="0 0 32 32" className="size-8" fill="none" stroke="currentColor" strokeWidth="1">
                  {tool.icon}
                </svg>
              </button>
            </div>
          ))}
        </div>
      ))}
      <div className="flex flex-1 items-end bg-[#535353] p-[2px]">
        <svg viewBox="0 0 4 4" className="size-1" fill="#fff">
          <path d="M0 0l4 4H0z" />
        </svg>
      </div>
    </nav>
  );
}

export default function App() {
  return (
    <div className="flex h-screen bg-black font-[Roboto,'Open_Sans',sans-serif]">
      <div className="flex min-w-0 flex-1 flex-col bg-[#272727]">
        <Header />
        <div className="flex min-h-0 flex-1">
          <nav aria-label="Разделы" className="flex w-[62px] shrink-0 flex-col gap-[2px] pt-2 pb-[9px] pl-[6px]">
            {railIcons.map((item) => (
              <button
                key={item.label}
                type="button"
                aria-label={item.label}
                className={clsx('size-12 text-[#e0e0e0]', item.label === 'Коллизии' ? 'bg-[#8b8b8b]' : 'bg-[#535353]')}
              >
                <svg viewBox="0 0 48 48" className="size-12" fill="none" stroke="currentColor" strokeLinejoin="round" strokeLinecap="round">
                  {item.icon}
                </svg>
              </button>
            ))}
            <button type="button" className="mt-auto ml-[11px] size-6 rounded-full bg-[#535353] text-[16px] leading-6 font-bold text-white">
              ?
            </button>
          </nav>
          <div className="flex pt-2 pb-[2px]">
            <LeftPanel />
          </div>
          <main className="flex min-w-0 flex-1 flex-col pr-2 pl-2">
            <div className="relative min-h-0 flex-1 overflow-hidden pt-2">
              <button type="button" aria-label="Показать всё" className="block size-8 bg-[#535353] text-[#e0e0e0]">
                <svg viewBox="0 0 32 32" className="size-8" fill="none" stroke="currentColor" strokeWidth="1.500">
                  <path d="M5 11V5h6M21 5h6v6M27 21v6h-6M11 27H5v-6" />
                  <path d="M16 9.500l5.500 3v7l-5.500 3-5.500-3v-7z" fill="currentColor" />
                </svg>
              </button>
              <Building />
              <AxisGizmo />
              <ViewCube />
            </div>
            <CollisionTable />
          </main>
          <RightToolbar />
        </div>
      </div>
      <div className="flex w-[6px] shrink-0 items-center overflow-hidden">
        <span className="pt-[430px] text-[12px] leading-4 text-[#d0d0d0]">t</span>
      </div>
    </div>
  );
}
